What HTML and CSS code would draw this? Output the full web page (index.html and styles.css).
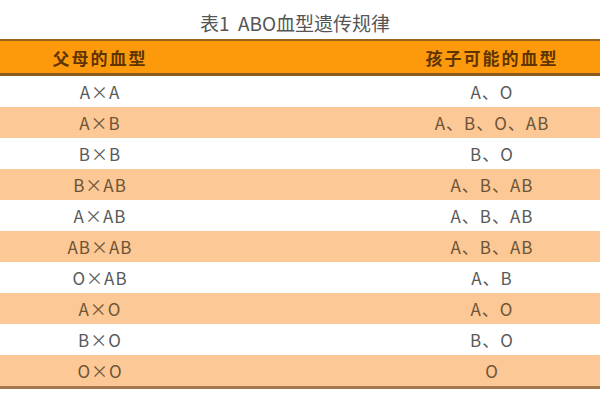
FILE: index.html
```html
<!DOCTYPE html>
<html lang="zh-CN">
<head>
<meta charset="utf-8">
<title>表1 ABO血型遗传规律</title>
<link rel="stylesheet" href="styles.css">
</head>
<body>
<div class="page">
  <div class="title">表1&nbsp;&nbsp;ABO血型遗传规律</div>
  <div class="table">
    <div class="row head"><div class="c1">父母的血型</div><div class="c2">孩子可能的血型</div></div>
    <div class="row"><div class="c1">A×A</div><div class="c2">A、O</div></div>
    <div class="row alt"><div class="c1">A×B</div><div class="c2">A、B、O、AB</div></div>
    <div class="row"><div class="c1">B×B</div><div class="c2">B、O</div></div>
    <div class="row alt"><div class="c1">B×AB</div><div class="c2">A、B、AB</div></div>
    <div class="row"><div class="c1">A×AB</div><div class="c2">A、B、AB</div></div>
    <div class="row alt"><div class="c1">AB×AB</div><div class="c2">A、B、AB</div></div>
    <div class="row"><div class="c1">O×AB</div><div class="c2">A、B</div></div>
    <div class="row alt"><div class="c1">A×O</div><div class="c2">A、O</div></div>
    <div class="row"><div class="c1">B×O</div><div class="c2">B、O</div></div>
    <div class="row alt"><div class="c1">O×O</div><div class="c2">O</div></div>
  </div>
</div>
</body>
</html>
```
FILE: styles.css
```css
html, body {
  margin: 0;
  padding: 0;
  background: #ffffff;
}
body {
  font-family: "Noto Sans CJK SC", "Noto Sans", sans-serif;
  color: #555555;
}
.page {
  width: 600px;
  height: 400px;
  overflow: hidden;
}
.title {
  height: 39px;
  display: flex;
  align-items: center;
  justify-content: center;
  padding-right: 10px;
  padding-top: 5px;
  box-sizing: border-box;
  font-size: 19px;
  color: #555555;
}
.table {
  display: flex;
  flex-direction: column;
  border-bottom: 3px solid #a5774a;
}
.row {
  display: grid;
  grid-template-columns: 200px 184px 216px;
  height: 31px;
  align-items: center;
  font-size: 17px;
  letter-spacing: 1px;
  background: #ffffff;
  color: #5a5a5a;
}
.row.alt {
  background: #fbc896;
  color: #6e5436;
}
.c1 {
  grid-column: 1;
  text-align: center;
}
.c2 {
  grid-column: 3;
  text-align: center;
}
.row.head {
  height: 32px;
  background: #fd9a0c;
  border-top: 2px solid #9a6418;
  border-bottom: 3px solid #8a5a20;
  font-size: 17px;
  font-weight: bold;
  letter-spacing: 2px;
  color: #5e3400;
}
```
